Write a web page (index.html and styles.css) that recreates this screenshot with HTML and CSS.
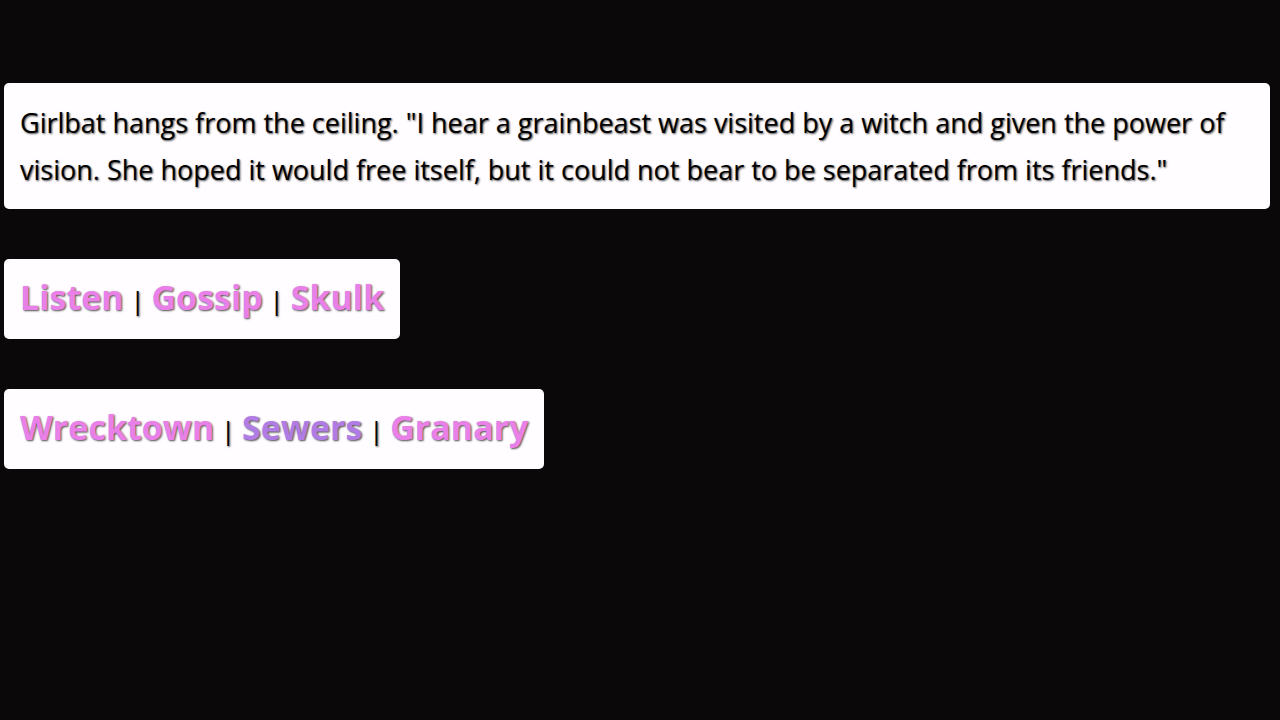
FILE: index.html
```
<!DOCTYPE html>
<html lang="en">
    <head>
        <meta charset="utf-8">
        <title>Sewers</title>
        <link rel="stylesheet" href="styles.css">
    </head>

    <body>
        <p class="box story">Girlbat hangs from the ceiling. "I hear a grainbeast was visited by a witch and given the power of vision. She hoped it would free itself, but it could not bear to be separated from its friends."</p>

        <div class="box menu">
            <a href="#listen">Listen</a> | <a href="#gossip">Gossip</a> | <a href="#skulk">Skulk</a>
        </div>

        <nav class="box menu">
            <a href="#wrecktown">Wrecktown</a> | <a href="#sewers" class="current">Sewers</a> | <a href="#granary">Granary</a>
        </nav>
    </body>
</html>
```

FILE: styles.css
```
body {
    display: flex;
    flex-direction: column;
    align-items: flex-start;
    gap: 50px;
    margin: 0;
    padding: 83px 10px 0 4px;
    background-color: #0a0809;
    color: #000;
    font-family: "Open Sans", sans-serif;
    font-size: 27px;
    line-height: 47px;
}
.box {
    box-sizing: border-box;
    margin: 0;
    padding: 16px;
    background-color: #fffdff;
    border-radius: 5px;
    text-shadow: 1px 1px 2px rgba(0, 0, 0, 0.7);
}
.story {
    width: 100%;
}
.menu {
    padding: 17px 16px 15px;
    font-size: 26px;
    line-height: 48px;
}
.menu a {
    color: #e880e8;
    font-size: 34px;
    font-weight: bold;
    line-height: 1;
    text-decoration: none;
}
.menu .current {
    color: #b07ce4;
}
```
